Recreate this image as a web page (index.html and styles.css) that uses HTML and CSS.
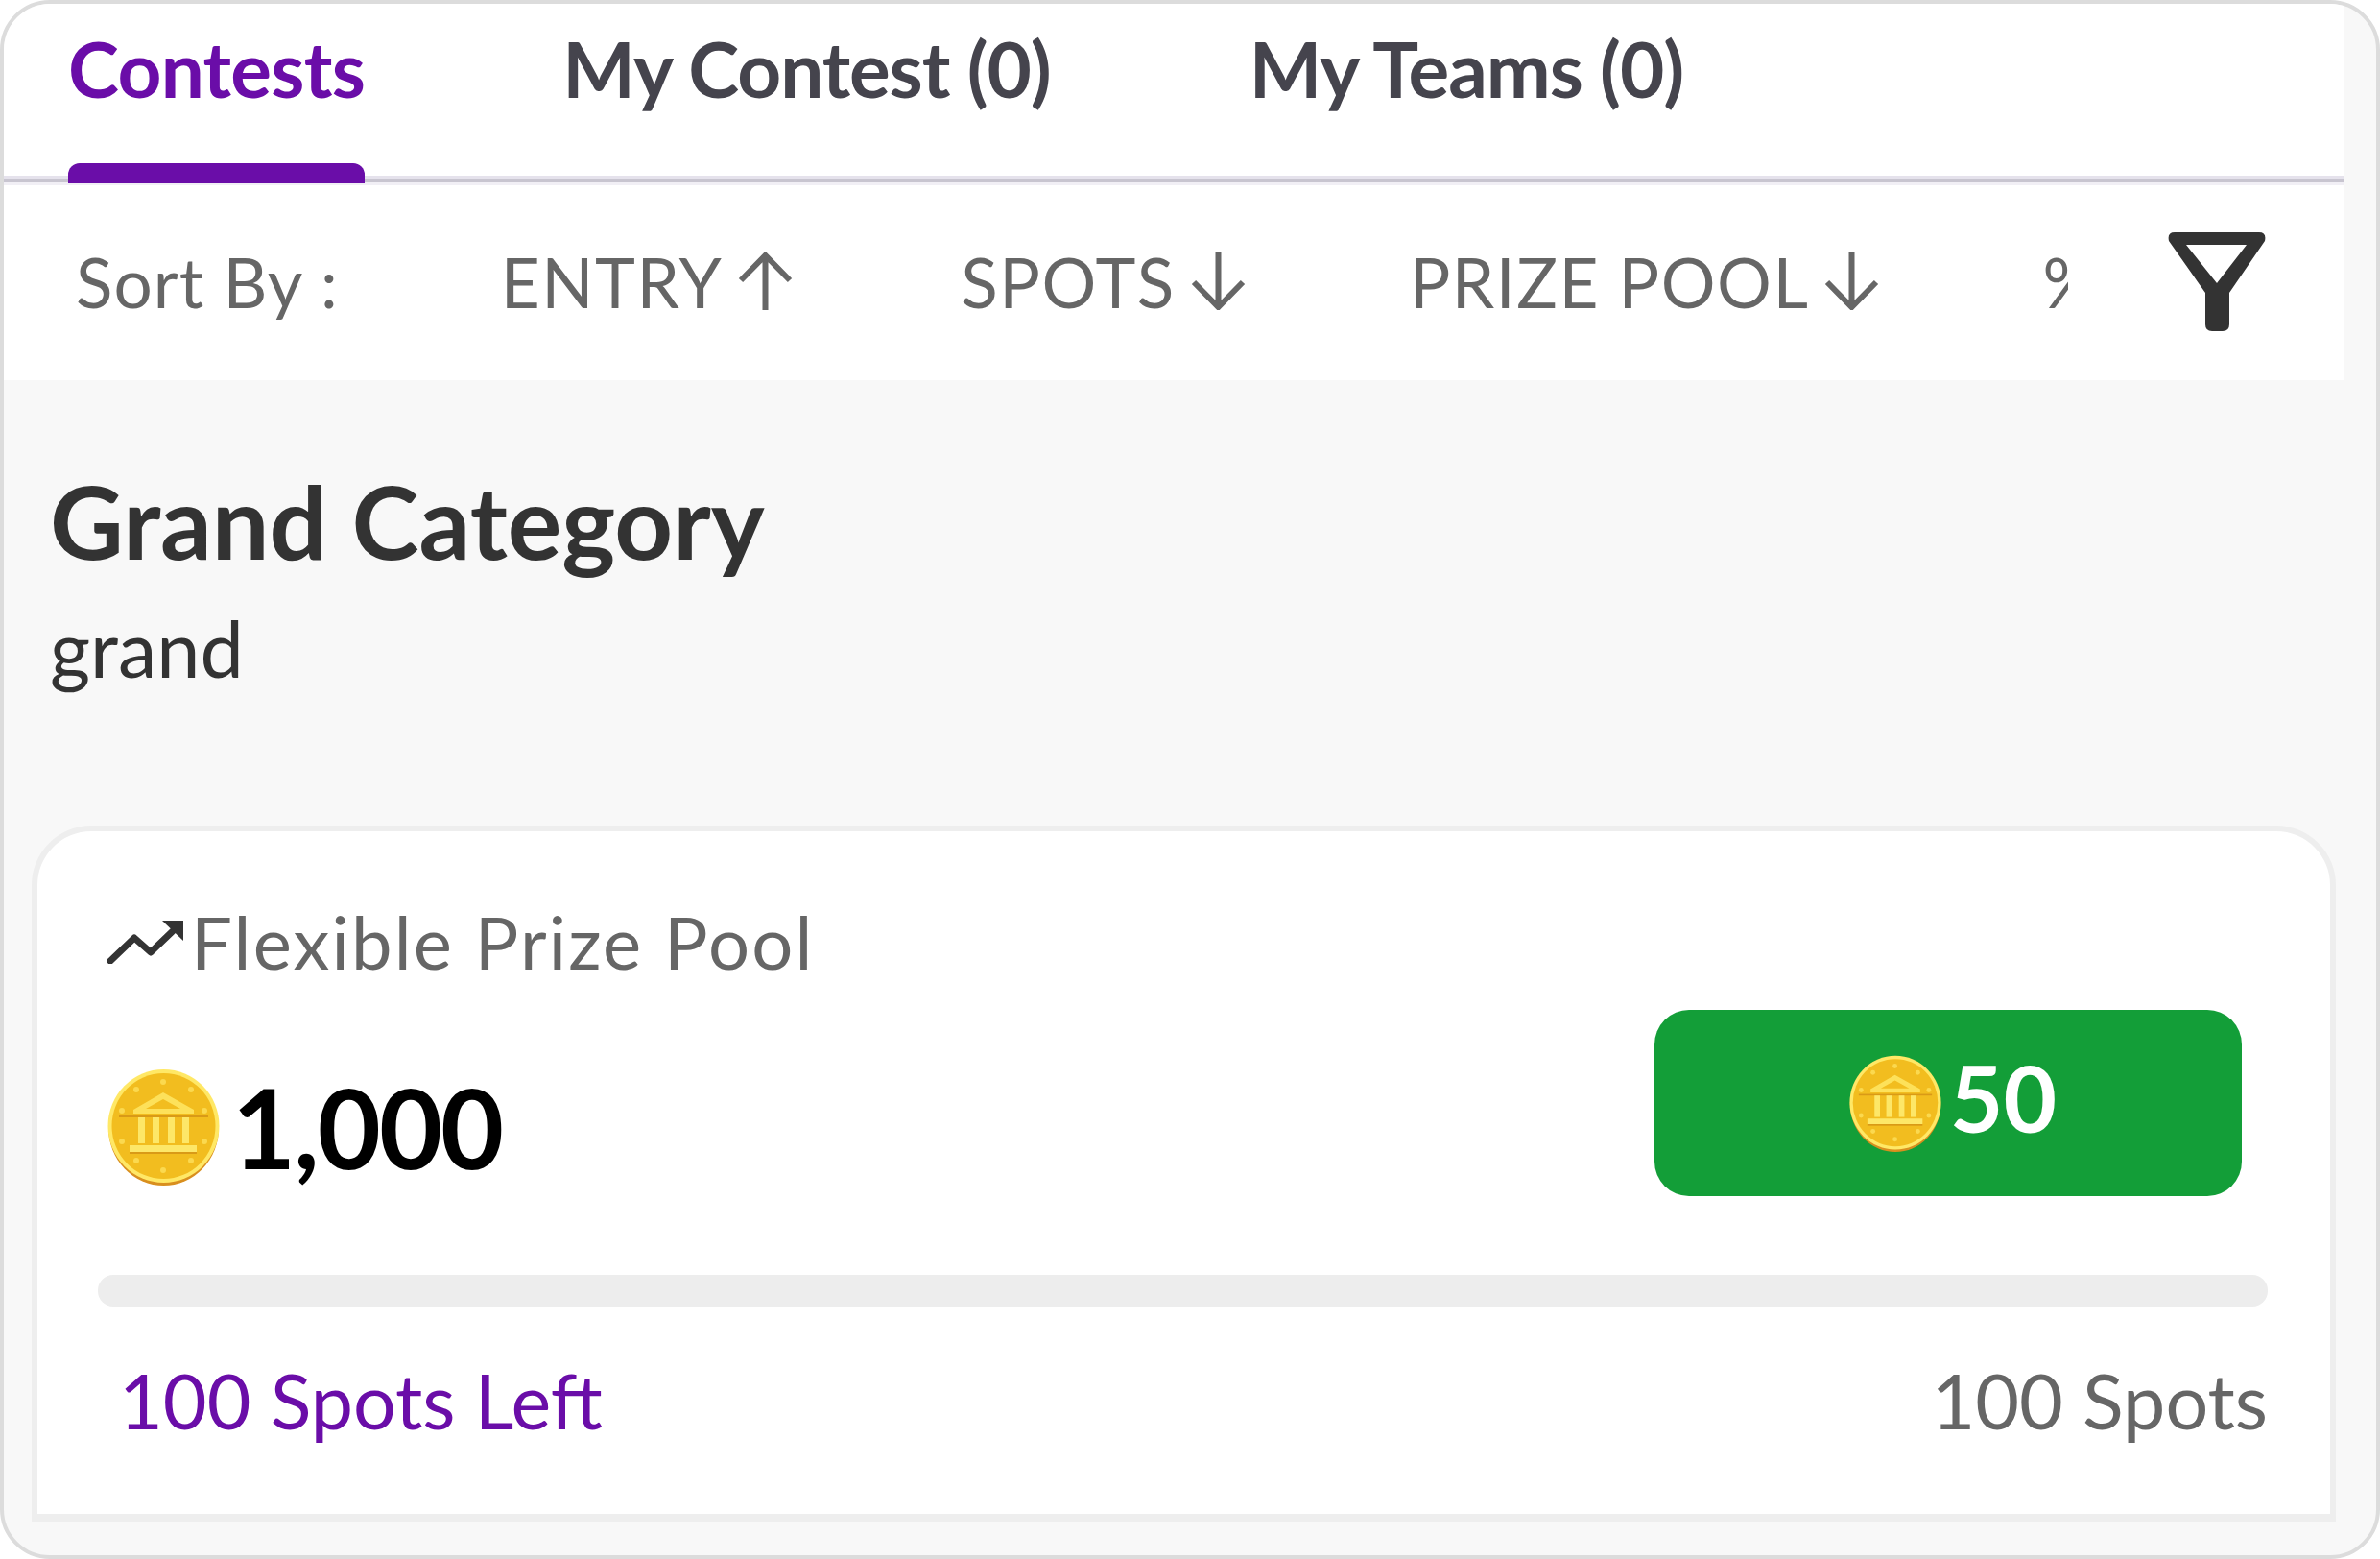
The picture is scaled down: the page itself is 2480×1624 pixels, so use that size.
FILE: index.html
```html
<!DOCTYPE html>
<html lang="en">
<head>
    <meta charset="UTF-8">
    <meta name="viewport" content="width=device-width, initial-scale=1.0">
    <title>Contests</title>
    <link rel="stylesheet" href="styles.css">
</head>
<body>
    <svg class="defs" width="0" height="0">
        <defs>
            <symbol id="coin" viewBox="0 0 117 122" preserveAspectRatio="none">
                <ellipse cx="58.5" cy="62" rx="57.5" ry="60" fill="#d98f1e"/>
                <ellipse cx="58.5" cy="60" rx="58" ry="59" fill="#ffe866"/>
                <ellipse cx="58.5" cy="60" rx="54" ry="55" fill="#f2bd1f"/>
                <!-- stars -->
                <g fill="#fbd94f">
                    <circle cx="58" cy="14" r="3"/><circle cx="30" cy="22" r="3"/><circle cx="87" cy="22" r="3"/>
                    <circle cx="15" cy="44" r="3"/><circle cx="101" cy="44" r="3"/><circle cx="15" cy="76" r="3"/>
                    <circle cx="101" cy="76" r="3"/><circle cx="30" cy="96" r="3"/><circle cx="87" cy="96" r="3"/>
                    <circle cx="58" cy="106" r="3"/>
                </g>
                <!-- bank -->
                <path d="M58 25 L90 43 V47 H27 V43 Z" fill="#fde15a"/>
                <path d="M58 32 L76 42 H40 Z" fill="#f2bd1f"/>
                <rect x="12" y="49" width="93" height="2" fill="#d99a17"/>
                <g fill="#fde768">
                    <rect x="32" y="51" width="7" height="27"/><rect x="47" y="51" width="7" height="27"/>
                    <rect x="63" y="51" width="7" height="27"/><rect x="78" y="51" width="7" height="27"/>
                    <rect x="23" y="80" width="70" height="7"/>
                </g>
                <rect x="23" y="87" width="70" height="2" fill="#d99a17"/>
            </symbol>
            <symbol id="arrow-up" viewBox="0 0 57 60">
                <path d="M28.5 60 V3 M3 29 L28.5 3 L54 29" fill="none" stroke="#666" stroke-width="6"/>
            </symbol>
            <symbol id="arrow-down" viewBox="0 0 57 60">
                <path d="M28.5 0 V57 M3 31 L28.5 57 L54 31" fill="none" stroke="#666" stroke-width="6"/>
            </symbol>
        </defs>
    </svg>

    <div class="frame">
        <div class="top">
            <!-- Tabs -->
            <nav class="tabs">
                <a class="tab tab-active">Contests</a>
                <a class="tab tab-second">My Contest (0)</a>
                <a class="tab tab-third">My Teams (0)</a>
            </nav>

            <!-- Sort row -->
            <div class="sort-row">
                <div class="sort-list">
                    <span class="sort-label">Sort By :</span>
                    <span class="sort-item sort-entry">ENTRY<svg class="arrow"><use href="#arrow-up"/></svg></span>
                    <span class="sort-item sort-spots">SPOTS<svg class="arrow"><use href="#arrow-down"/></svg></span>
                    <span class="sort-item sort-prize">PRIZE POOL<svg class="arrow"><use href="#arrow-down"/></svg></span>
                    <span class="sort-item sort-percent">%</span>
                </div>
                <svg class="filter" viewBox="0 0 102 103">
                    <path fill-rule="evenodd" fill="#333" d="M7 0 H95 Q103 0 101 9 L64 63 V96 Q64 103 57 103 H46 Q39 103 39 96 V63 L1 9 Q-1 0 7 0 Z M19 13 L51 53 L82 13 Z"/>
                </svg>
            </div>
        </div>

        <!-- Category -->
        <h1 class="category-title">Grand Category</h1>
        <p class="category-sub">grand</p>

        <!-- Contest card -->
        <div class="card">
            <div class="flex-label">
                <svg class="trend" viewBox="0 0 79 46">
                    <path d="M3 43 L28 19 L45 34 L70 10" fill="none" stroke="#333" stroke-width="7" stroke-linecap="round" stroke-linejoin="round"/>
                    <path d="M57 1 H79 V22 Z" fill="#333"/>
                </svg>
                <span>Flexible Prize Pool</span>
            </div>
            <div class="prize-row">
                <div class="prize">
                    <svg class="coin-big"><use href="#coin"/></svg>
                    <span class="prize-value">1,000</span>
                </div>
                <button class="join" type="button">
                    <svg class="coin-small"><use href="#coin"/></svg>
                    <span class="join-price">50</span>
                </button>
            </div>
            <div class="progress"></div>
            <div class="spots">
                <span class="spots-left">100 Spots Left</span>
                <span class="spots-total">100 Spots</span>
            </div>
        </div>
    </div>
</body>
</html>
```

FILE: styles.css
```css
* {
    box-sizing: border-box;
}
body {
    margin: 0;
    background: #fff;
    font-family: Lato, "Open Sans", sans-serif;
}
.defs {
    position: absolute;
}
.frame {
    width: 2480px;
    height: 1624px;
    border: 4px solid #dcdcdc;
    border-radius: 52px;
    background: #f8f8f8;
    overflow: hidden;
}
.top {
    width: 2438px;
    height: 392px;
    background: #fff;
}
.tabs {
    display: flex;
    height: 186px;
    padding-left: 67px;
    border-bottom: 4px solid #c8c5d0;
    box-shadow: inset 0 -3px 0 #e5e2ec, 0 3px 0 #f1eff5;
}
.tab {
    position: relative;
    height: 182px;
    padding-top: 19px;
    font-size: 80px;
    line-height: 96px;
    font-weight: 700;
    letter-spacing: -1.1px;
    color: #45444d;
}
.tab-active {
    letter-spacing: -0.7px;
    color: #6a0da8;
}
.tab-active::after {
    content: "";
    position: absolute;
    left: 0;
    right: 0;
    bottom: -5px;
    height: 21px;
    border-radius: 12px 12px 0 0;
    background: #6a0da8;
}
.tab-second {
    margin-left: 206px;
}
.tab-third {
    margin-left: 207px;
}
.sort-row {
    display: flex;
    align-items: center;
    height: 206px;
    padding-left: 75px;
}
.sort-list {
    display: flex;
    align-items: center;
    width: 2076px;
    overflow: hidden;
    white-space: nowrap;
    font-size: 71px;
    letter-spacing: 1.5px;
    color: #666;
}
.sort-label {
    letter-spacing: 1.1px;
}
.sort-item {
    display: flex;
    align-items: center;
    flex-shrink: 0;
}
.sort-entry {
    margin-left: 169px;
}
.sort-spots {
    margin-left: 175px;
}
.sort-prize {
    margin-left: 171px;
}
.sort-percent {
    margin-left: 170px;
}
.arrow {
    width: 57px;
    height: 60px;
    margin-left: 16px;
}
.filter {
    width: 102px;
    height: 103px;
    margin-left: 104px;
}
.category-title {
    margin: 86px 0 0 48px;
    font-size: 106px;
    line-height: 120px;
    font-weight: 700;
    color: #333;
}
.category-sub {
    margin: 28px 0 0 48px;
    font-size: 81px;
    line-height: 90px;
    color: #333;
}
.card {
    width: 2401px;
    height: 725px;
    margin: 140px 0 0 29px;
    padding: 70px 92px 0 73px;
    background: #fff;
    border: 6px solid #eee;
    border-bottom-width: 8px;
    border-radius: 62px 62px 0 0;
}
.flex-label {
    display: flex;
    align-items: center;
    font-size: 76px;
    line-height: 90px;
    letter-spacing: 2.2px;
    color: #666;
}
.trend {
    width: 79px;
    height: 46px;
    margin-right: 8px;
}
.prize-row {
    display: flex;
    justify-content: space-between;
    align-items: flex-start;
    margin-top: 26px;
}
.prize {
    display: flex;
    align-items: center;
    margin-top: 61px;
}
.coin-big {
    width: 117px;
    height: 122px;
}
.prize-value {
    margin-left: 13px;
    font-size: 114px;
    line-height: 122px;
    font-weight: 700;
    letter-spacing: -2px;
    color: #000;
}
.join {
    display: flex;
    align-items: center;
    justify-content: center;
    width: 612px;
    height: 194px;
    padding: 0 0 0 10px;
    border: none;
    border-radius: 36px;
    background: #139e38;
    color: #fff;
    font-family: inherit;
    font-size: 96px;
    font-weight: 700;
}
.join-price {
    margin-bottom: 14px;
}
.coin-small {
    width: 96px;
    height: 101px;
    margin-right: 9px;
}
.progress {
    width: 2261px;
    height: 33px;
    margin: 82px 0 0 -10px;
    border-radius: 16px;
    background: #ededed;
}
.spots {
    display: flex;
    justify-content: space-between;
    width: 2251px;
    margin-top: 52px;
    padding-left: 12px;
    font-size: 79px;
    line-height: 92px;
}
.spots-left {
    color: #6a0da8;
}
.spots-total {
    color: #666;
}
```
